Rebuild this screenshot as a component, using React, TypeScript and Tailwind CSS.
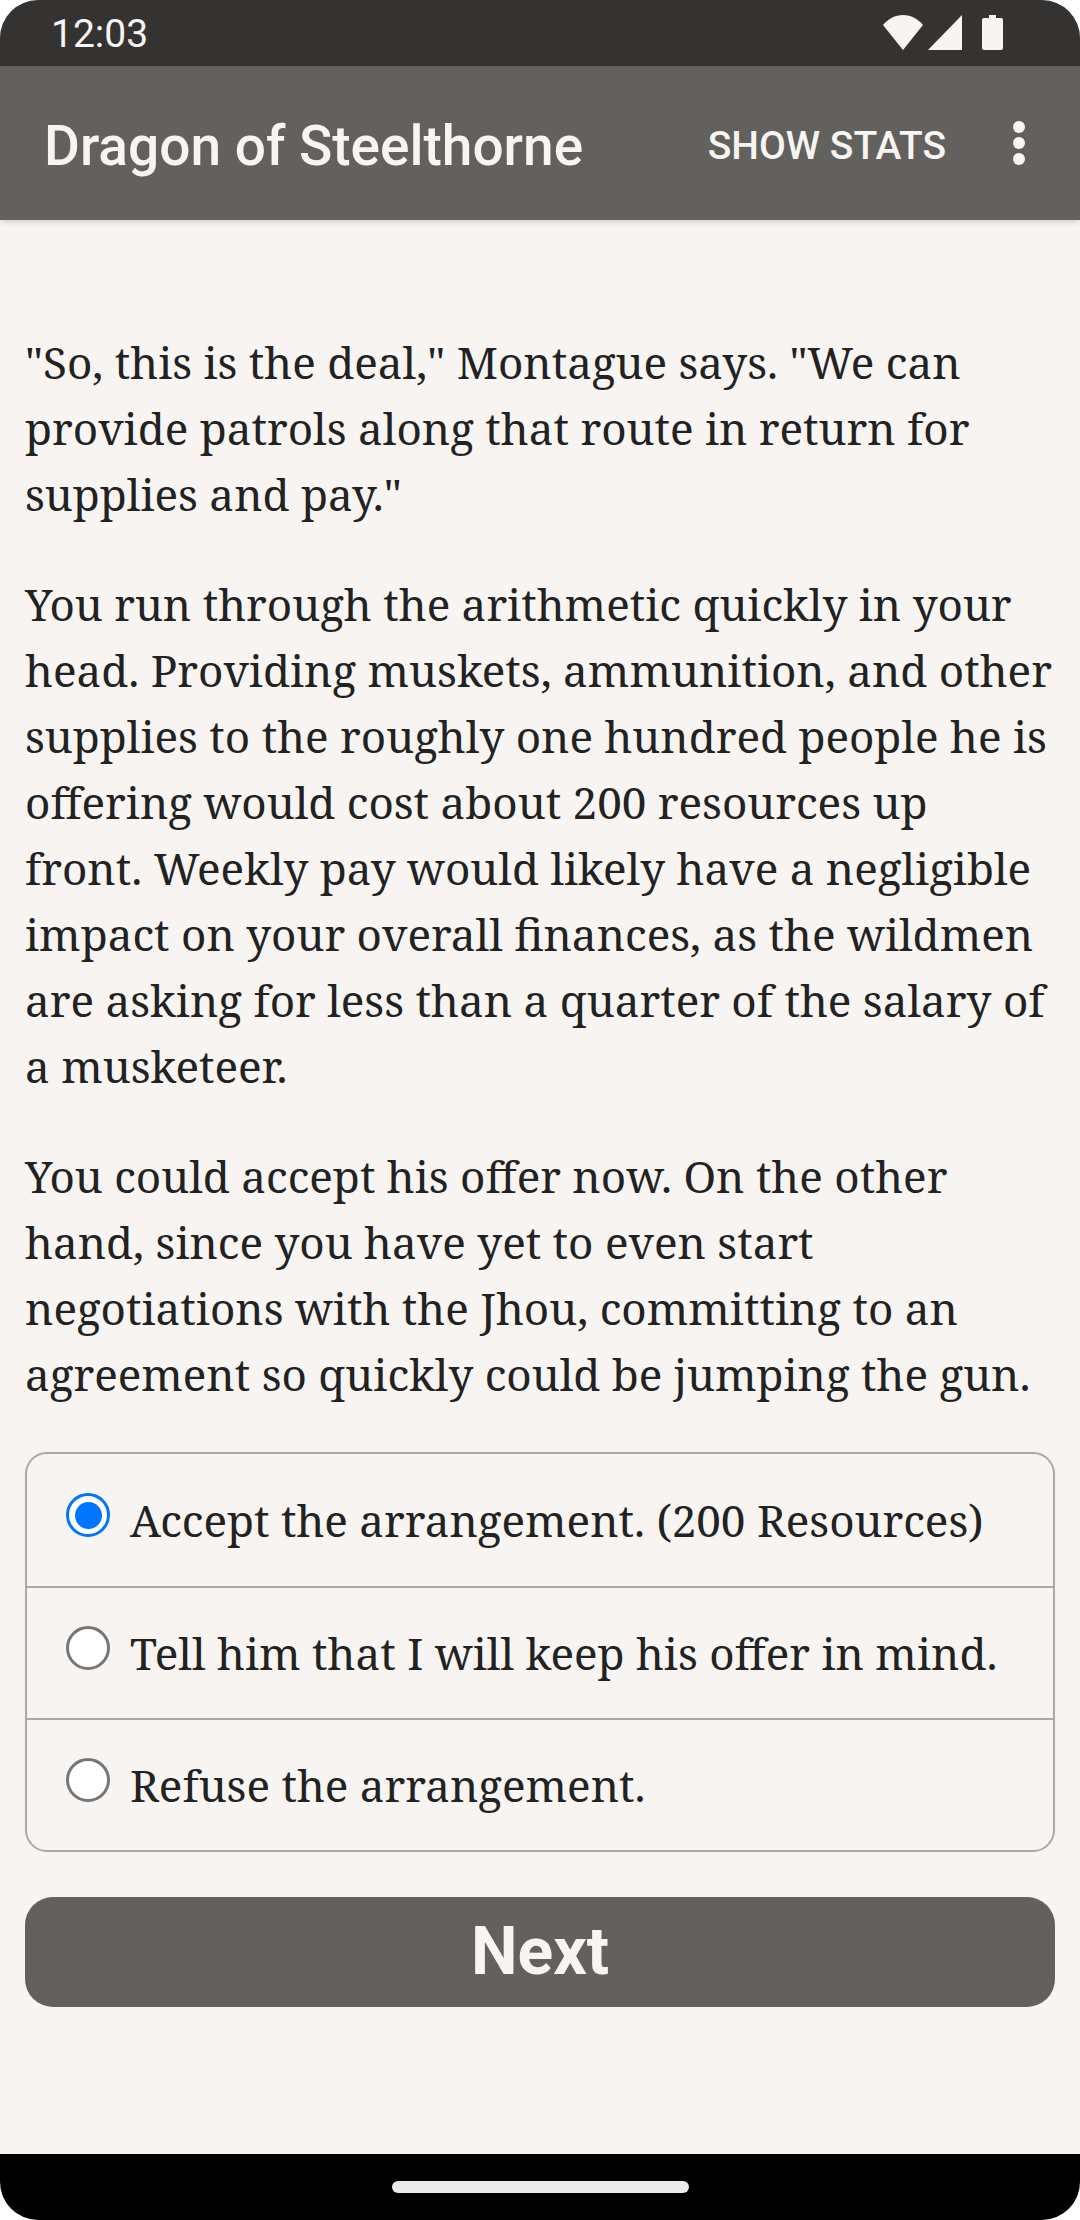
const serif = { fontFamily: '"Noto Serif", "DejaVu Serif", serif' };

const options = [
  "Accept the arrangement. (200 Resources)",
  "Tell him that I will keep his offer in mind.",
  "Refuse the arrangement.",
];

const StatusBar = () => (
  <div className="h-[66px] bg-[#343331] flex items-center justify-between pl-[51px] pr-[77px] text-[#f7f4f1]">
    <span className="text-[39px] font-['Roboto',sans-serif] pt-[2px]">12:03</span>
    <div className="flex items-center mt-[-2px]">
      <svg width="40" height="35" viewBox="0 0 40 35" fill="#f7f4f1"><path d="M20 35 0 10C5 4 12 0 20 0s15 4 20 10z" /></svg>
      <svg className="ml-[5px]" width="34" height="35" viewBox="0 0 34 35" fill="#f7f4f1"><path d="M34 0v35H0z" /></svg>
      <svg className="ml-[20px]" width="21" height="35" viewBox="0 0 21 35" fill="#f7f4f1"><path d="M7 0h7v3h5a2 2 0 0 1 2 2v28a2 2 0 0 1-2 2H2a2 2 0 0 1-2-2V5a2 2 0 0 1 2-2h5z" /></svg>
    </div>
  </div>
);

const App = () => {
  return (
    <div className="w-[1080px] h-[2220px] bg-[#f7f4f1] flex flex-col overflow-hidden rounded-[38px]">
      <StatusBar />
      <div className="relative h-[154px] bg-[#62615e] flex items-center pl-[44px] pr-[55px] text-[#f7f4f1] font-['Roboto',sans-serif] shadow-md">
        <h1 className="text-[55px] font-medium flex-1 pt-[6px]">Dragon of Steelthorne</h1>
        <span className="text-[39px] font-medium mr-[67px] pt-[6px]">SHOW STATS</span>
        <div className="flex flex-col gap-[4px]">
          <span className="w-[12px] h-[12px] rounded-full bg-[#f7f4f1]" />
          <span className="w-[12px] h-[12px] rounded-full bg-[#f7f4f1]" />
          <span className="w-[12px] h-[12px] rounded-full bg-[#f7f4f1]" />
        </div>
      </div>
      <div className="flex-1 px-[25px] pt-[109px] text-[#222222] text-[44px] leading-[66px]" style={serif}>
        <p className="mb-[44px]">"So, this is the deal," Montague says. "We can provide patrols along that route in return for supplies and pay."</p>
        <p className="mb-[44px]">You run through the arithmetic quickly in your head. Providing muskets, ammunition, and other supplies to the roughly one hundred people he is offering would cost about 200 resources up front. Weekly pay would likely have a negligible impact on your overall finances, as the wildmen are asking for less than a quarter of the salary of a musketeer.</p>
        <p>You could accept his offer now. On the other hand, since you have yet to even start negotiations with the Jhou, committing to an agreement so quickly could be jumping the gun.</p>
        <div className="mt-[45px] border-2 border-[#a9a9a9] rounded-[22px]">
          {options.map((o, i) => (
            <div key={o} className={`h-[132px] flex items-center pl-[39px] gap-[20px] ${i > 0 ? "border-t-2 border-[#a9a9a9]" : ""}`}>
              <span className={`w-[44px] h-[44px] mb-[10px] shrink-0 rounded-full border-[3px] flex items-center justify-center bg-white ${i === 0 ? "border-[#0075ff]" : "border-[#767676]"}`}>
                {i === 0 && <span className="w-[27px] h-[27px] rounded-full bg-[#0075ff]" />}
              </span>
              <span>{o}</span>
            </div>
          ))}
        </div>
        <button className="mt-[45px] w-full h-[110px] bg-[#62615e] rounded-[28px] text-[#f7f4f1] text-[66px] font-bold font-['Roboto',sans-serif]">Next</button>
      </div>
      <div className="h-[66px] bg-black flex items-center justify-center">
        <div className="w-[297px] h-[12px] bg-[#ebebeb] rounded-full" />
      </div>
    </div>
  );
};

export default App;
